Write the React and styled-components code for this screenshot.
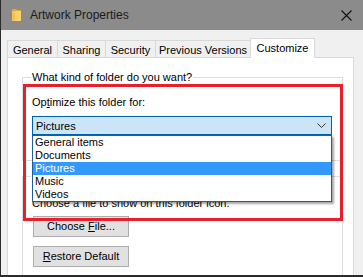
import React from "react";
import styled, { createGlobalStyle } from "styled-components";

const Global = createGlobalStyle`
  html, body { margin: 0; padding: 0; background: #ffffff; }
  body { font-family: "Liberation Sans", Arial, sans-serif; font-size: 11px; color: #000; }
  * { box-sizing: border-box; }
`;

const Window = styled.div`
  position: relative;
  width: 363px;
  height: 277px;
  background: #f0f0f0;
  border-left: 1px solid #2b2b2b;
  border-bottom: 2px solid #2b2b2b;
  display: flex;
  flex-direction: column;
  overflow: hidden;
`;

const TitleBar = styled.div`
  height: 30px;
  flex: none;
  background: #8b8b8b;
  display: flex;
  align-items: center;
  padding-left: 11px;
  padding-right: 11px;
`;

const Title = styled.span`
  margin-left: 8px;
  font-size: 12px;
  color: #1a1a1a;
  flex: 1;
`;

const Body = styled.div`
  flex: 1;
  display: flex;
  flex-direction: column;
  padding: 8px 9px 0 6px;
  min-height: 0;
`;

const TabStrip = styled.div`
  display: flex;
  align-items: flex-end;
  height: 19px;
  flex: none;
  position: relative;
  z-index: 1;
`;

const Tab = styled.div`
  width: ${(p) => p.w}px;
  height: ${(p) => (p.active ? 20 : 17)}px;
  margin-bottom: ${(p) => (p.active ? -1 : 0)}px;
  margin-left: -1px;
  &:first-child { margin-left: 0; }
  border: 1px solid #d9d9d9;
  border-bottom: none;
  background: ${(p) => (p.active ? "#ffffff" : "#f0f0f0")};
  text-align: center;
  padding-top: 3px;
  line-height: 13px;
  white-space: nowrap;
`;

const Panel = styled.div`
  flex: 1;
  background: #ffffff;
  border: 1px solid #d9d9d9;
  border-bottom: none;
  padding: 13px 10px 0 14px;
  display: flex;
  flex-direction: column;
  gap: 9px;
  min-height: 0;
`;

const Group = styled.fieldset`
  margin: 0;
  border: 1px solid #dcdcdc;
  padding: 0 9px;
  height: ${(p) => p.h}px;
  flex: none;
  display: flex;
  flex-direction: column;
`;

const Legend = styled.legend`
  padding: 0 1px;
  margin-left: -1px;
  line-height: 13px;
  min-width: ${(p) => p.gap || 0}px;
  height: 13px;
`;

const Label = styled.div`
  line-height: 13px;
  margin-top: ${(p) => p.mt || 0}px;
  white-space: nowrap;
`;

const U = styled.span`
  text-decoration: underline;
`;

const ComboWrap = styled.div`
  position: relative;
  width: 300px;
  margin-top: ${(p) => p.mt}px;
`;

const Combo = styled.div`
  height: 19px;
  border: 1px solid #0060b0;
  background: #cce4f7;
  display: flex;
  align-items: center;
  justify-content: space-between;
  padding: 0 5px 0 3px;
`;

const List = styled.ul`
  position: absolute;
  left: 0;
  top: 100%;
  width: 300px;
  margin: 0;
  padding: 0;
  list-style: none;
  background: #ffffff;
  border: 1px solid #1f5f9f;
  box-shadow: 2px 2px 2px rgba(0, 0, 0, 0.35);
  z-index: 5;
`;

const Item = styled.li`
  height: 13px;
  line-height: 13px;
  padding-left: 2px;
  background: ${(p) => (p.sel ? "#3399ff" : "transparent")};
  color: ${(p) => (p.sel ? "#ffffff" : "#000000")};
`;

const Button = styled.div`
  width: 96px;
  height: 21px;
  margin-top: ${(p) => p.mt}px;
  margin-left: 1px;
  background: #e1e1e1;
  border: 1px solid #adadad;
  display: flex;
  align-items: center;
  justify-content: center;
  line-height: 13px;
  white-space: pre;
`;

const Highlight = styled.div`
  position: absolute;
  left: 22px;
  top: 84px;
  width: 320px;
  height: 137px;
  border: 3px solid #e8202c;
  pointer-events: none;
  z-index: 10;
`;

const FolderIcon = () => (
  <svg width="10" height="14" viewBox="0 0 10 14">
    <path d="M0 1 H4 L5 2 H9 V13 H0 Z" fill="#e0a93a" />
    <path d="M0 3 H9 V13 H0 Z" fill="#f8d36b" />
    <path d="M0 3 H3 V13 H0 Z" fill="#f3c24f" />
  </svg>
);

const CloseIcon = () => (
  <svg width="11" height="11" viewBox="0 0 11 11">
    <path d="M0.5 0.5 L10.5 10.5 M10.5 0.5 L0.5 10.5" stroke="#111" strokeWidth="1.1" fill="none" />
  </svg>
);

const Chevron = () => (
  <svg width="9" height="5" viewBox="0 0 9 5">
    <path d="M0.5 0.5 L4.5 4.5 L8.5 0.5" stroke="#333" strokeWidth="1" fill="none" />
  </svg>
);

const tabs = [
  { label: "General", w: 51 },
  { label: "Sharing", w: 49 },
  { label: "Security", w: 51 },
  { label: "Previous Versions", w: 96 },
  { label: "Customize", w: 65, active: true },
];

const options = ["General items", "Documents", "Pictures", "Music", "Videos"];

export default function App() {
  return (
    <>
      <Global />
      <Window>
        <TitleBar>
          <FolderIcon />
          <Title>Artwork Properties</Title>
          <CloseIcon />
        </TitleBar>
        <Body>
          <TabStrip>
            {tabs.map((t) => (
              <Tab key={t.label} w={t.w} active={t.active}>
                {t.label}
              </Tab>
            ))}
          </TabStrip>
          <Panel>
            <Group h={90}>
              <Legend>What kind of folder do you want?</Legend>
              <Label mt={12}>
                Op<U>t</U>imize this folder for:
              </Label>
              <ComboWrap mt={7}>
                <Combo>
                  <span>Pictures</span>
                  <Chevron />
                </Combo>
                <List>
                  {options.map((o) => (
                    <Item key={o} sel={o === "Pictures"}>
                      {o}
                    </Item>
                  ))}
                </List>
              </ComboWrap>
            </Group>
            <Group h={120}>
              <Legend gap={80} aria-hidden="true" />
              <Label mt={14}>Choose a file to show on this folder icon.</Label>
              <Button mt={6}>
                <span>
                  Choose <U>F</U>ile...
                </span>
              </Button>
              <Button mt={9}>
                <span>
                  <U>R</U>estore Default
                </span>
              </Button>
            </Group>
          </Panel>
        </Body>
        <Highlight />
      </Window>
    </>
  );
}
